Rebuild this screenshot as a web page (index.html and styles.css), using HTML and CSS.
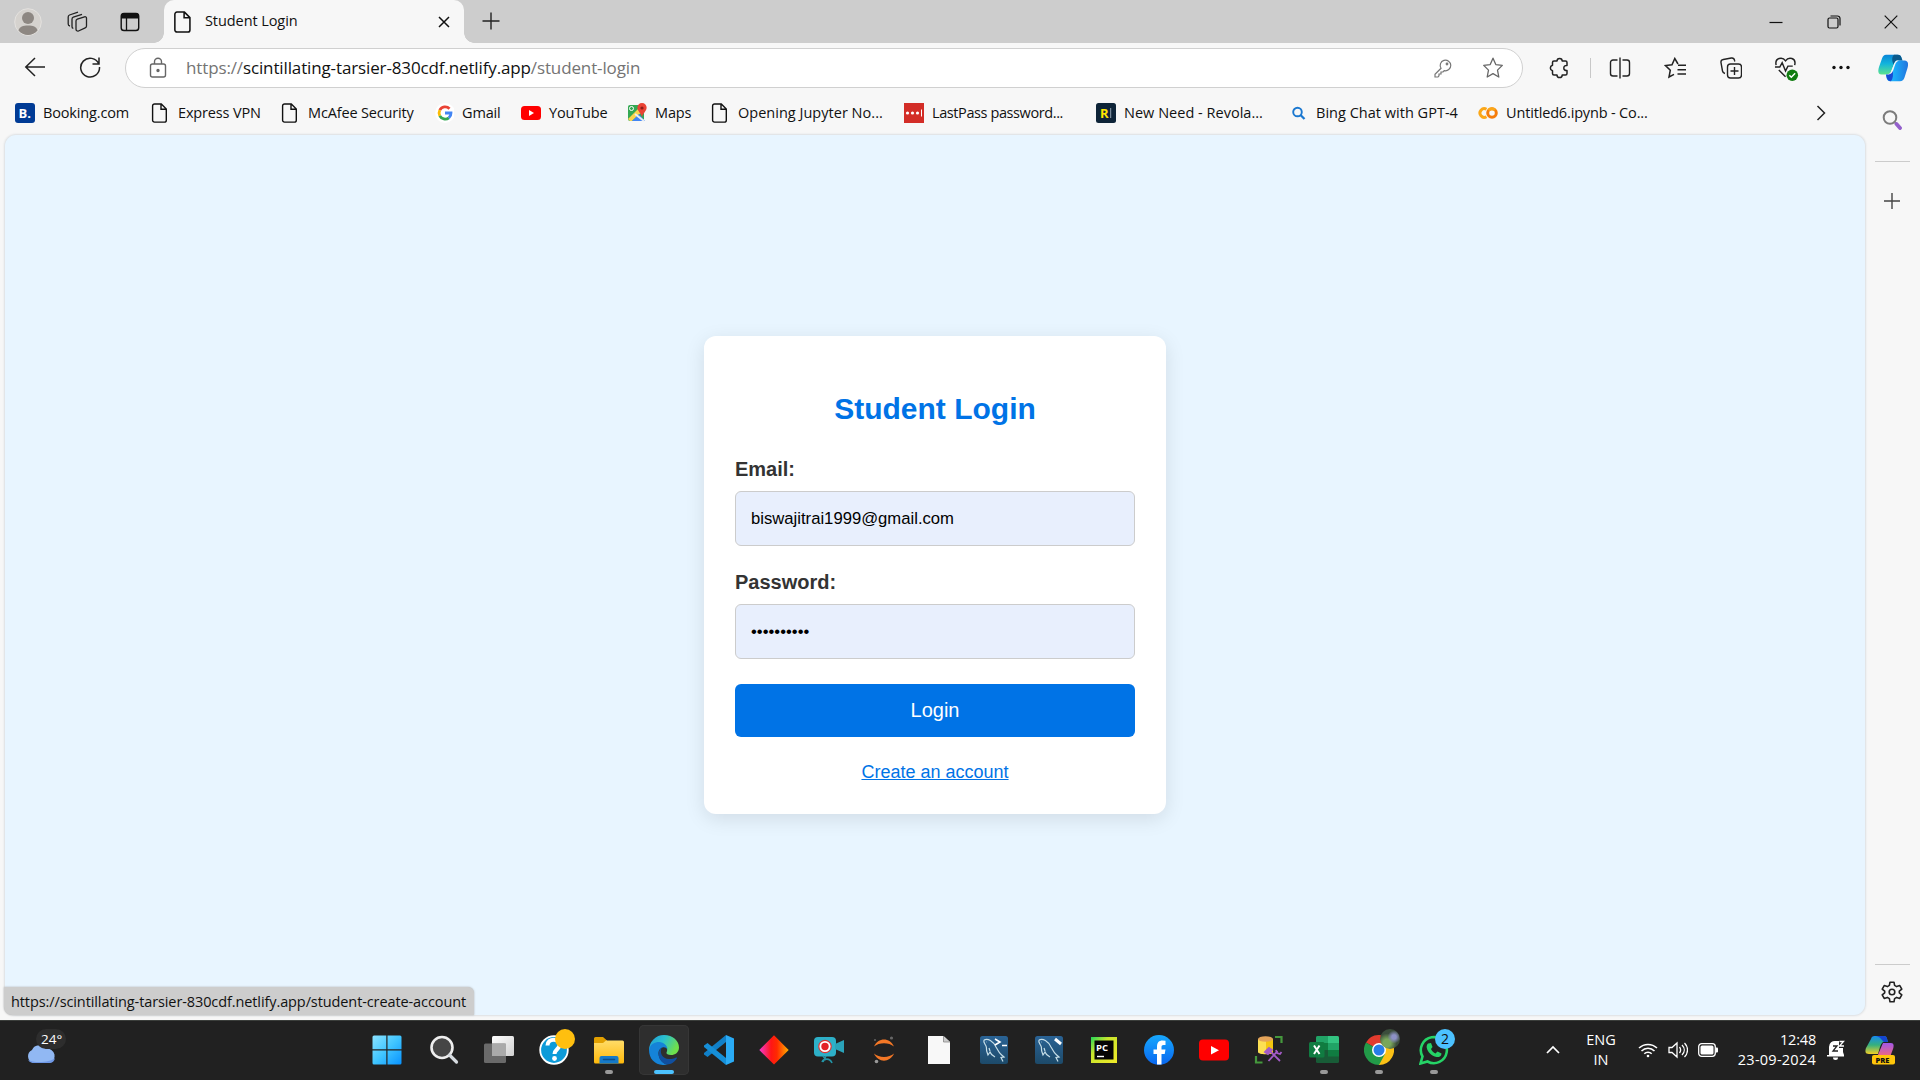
FILE: index.html
```html
<!DOCTYPE html>
<html lang="en">
<head>
<meta charset="utf-8">
<title>Student Login</title>
<link rel="stylesheet" href="styles.css">
</head>
<body>
<svg class="defs" width="0" height="0" aria-hidden="true">
  <defs>
    <symbol id="file" viewBox="0 0 20 20"><path d="M4.500 1h6.800l5 5v11.200a1.900 1.900 0 0 1-1.900 1.900H4.500a1.900 1.900 0 0 1-1.900-1.900V2.900A1.900 1.900 0 0 1 4.500 1zM11 1.200v5h5.200" fill="none" stroke="#111" stroke-width="1.400"/></symbol>
    <symbol id="dolphin" viewBox="0 0 30 30"><rect x="1" y="1" width="28" height="28" rx="2.500" fill="url(#sea)"/><path d="M5 5c4-2 9 1 12 7l3 5c1 2 3 3 5 5l-3 .4 2 4M5 5c-1 2 1 4 2 6s0 4 1 6l1 3 2-3c1 3 3 4 5 5M10 13l1 3M7 7h.5" fill="none" stroke="#c7dfe8" stroke-width="1.200"/></symbol>
    <linearGradient id="sea" x2="0" y2="1"><stop stop-color="#2a6395"/><stop offset="1" stop-color="#1d4a69"/></linearGradient>
    <linearGradient id="win" x2="1" y2="1"><stop stop-color="#8be3ff"/><stop offset=".5" stop-color="#40c5ff"/><stop offset="1" stop-color="#0892ff"/></linearGradient>
    <linearGradient id="cop1" x2="0" y2="1"><stop stop-color="#0a85d8"/><stop offset=".45" stop-color="#12b4dc"/><stop offset="1" stop-color="#5de38d"/></linearGradient>
    <linearGradient id="cop2" x2="1" y2="0"><stop stop-color="#28c4ff"/><stop offset=".5" stop-color="#1aa3f5"/><stop offset="1" stop-color="#2374dc"/></linearGradient>
    <linearGradient id="pre1" x2="0" y2="1"><stop stop-color="#168bee"/><stop offset=".5" stop-color="#35b07d"/><stop offset="1" stop-color="#f3cf27"/></linearGradient>
    <linearGradient id="pre2" x2="0" y2="1"><stop stop-color="#a157e8"/><stop offset="1" stop-color="#f66a77"/></linearGradient>
    <linearGradient id="edgeTop" x2="1" y2=".4"><stop stop-color="#1f9ad9"/><stop offset=".5" stop-color="#2ac0cf"/><stop offset="1" stop-color="#6fe04c"/></linearGradient>
    <linearGradient id="folder" x2="0" y2="1"><stop stop-color="#ffdc68"/><stop offset="1" stop-color="#ffb90a"/></linearGradient>
    <linearGradient id="fire" x2="1"><stop stop-color="#f33bd2"/><stop offset=".4" stop-color="#ff1616"/><stop offset=".6" stop-color="#ff2a00"/><stop offset="1" stop-color="#ffb000"/></linearGradient>
    <linearGradient id="fb" x2="0" y2="1"><stop stop-color="#17a8fd"/><stop offset="1" stop-color="#0866f0"/></linearGradient>
    <linearGradient id="paper" x2="1" y2="1"><stop stop-color="#fff"/><stop offset="1" stop-color="#d0d0d0"/></linearGradient>
    <linearGradient id="pc" x2="1" y2="1"><stop stop-color="#21d759"/><stop offset=".35" stop-color="#c8e52c"/><stop offset="1" stop-color="#f0ea29"/></linearGradient>
  </defs>
</svg>

<header class="tabstrip">
  <div class="strip-tools">
    <svg class="avatar" viewBox="0 0 28 28"><circle cx="14" cy="14" r="13.300" fill="#d5d2ce" stroke="#e4e2df"/><circle cx="14" cy="10" r="6" fill="#8d8782"/><path d="M4.500 22.500c1-4 4.500-5 9.500-5s8.500 1 9.500 5A13 13 0 0 1 14 27a13 13 0 0 1-9.500-4.500z" fill="#8d8782"/></svg>
    <svg class="i22" viewBox="0 0 22 22" fill="none" stroke="#222" stroke-width="1.300"><path d="M11.300 8.200l7.200-2.400a1.500 1.500 0 0 1 2 1.500v7.700a2 2 0 0 1-1.300 1.900L12.500 20a1.800 1.800 0 0 1-2.500-1.700v-8.200a2 2 0 0 1 1.300-1.900zM7.300 17.500a2 2 0 0 1-1.300-2V8.200c0-1 .5-1.700 1.300-2l8.700-2.900M4 15a2 2 0 0 1-1.800-2V6c0-1 .5-1.700 1.300-2l8.500-2.800"/></svg>
    <svg class="i22" viewBox="0 0 22 22"><rect x="2.200" y="2.500" width="17.500" height="17" rx="2.800" fill="none" stroke="#111" stroke-width="1.400"/><path d="M2 7.500V5a3 3 0 0 1 3-3h12a3 3 0 0 1 3 3v2.500z" fill="#111"/><path d="M7.500 7v12" stroke="#111" stroke-width="1.300"/></svg>
  </div>
  <div class="tab">
    <svg class="i22" viewBox="0 0 20 20"><use href="#file"/></svg>
    <span class="tab-title">Student Login</span>
    <svg class="i12" viewBox="0 0 12 12"><path d="M1 1l10 10M11 1L1 11" stroke="#111" stroke-width="1.500"/></svg>
  </div>
  <svg class="newtab" viewBox="0 0 18 18"><path d="M9 .5v17M.5 9h17" stroke="#222" stroke-width="1.400"/></svg>
  <div class="window-buttons">
    <svg viewBox="0 0 14 14"><path d="M.5 7.500h13" stroke="#111" stroke-width="1.200"/></svg>
    <svg viewBox="0 0 14 14" fill="none" stroke="#111" stroke-width="1.200"><rect x="1" y="3" width="10" height="10" rx="1.500"/><path d="M3.500 1h7A2.500 2.500 0 0 1 13 3.500v7"/></svg>
    <svg viewBox="0 0 14 14"><path d="M.7.700l12.600 12.600M13.300.700L.7 13.300" stroke="#111" stroke-width="1.200"/></svg>
  </div>
</header>

<div class="toolbar">
  <svg class="nav" viewBox="0 0 22 22" fill="none" stroke="#222" stroke-width="1.500"><path d="M21 11H2M11 2l-9.200 9L11 20"/></svg>
  <svg class="nav" viewBox="0 0 22 22" fill="none" stroke="#222" stroke-width="1.500"><path d="M19.800 8a9.400 9.400 0 1 0 .7 3M20 1.500v6.500h-6.500"/></svg>
  <div class="address">
    <svg class="lock" viewBox="0 0 20 22" fill="none" stroke="#666" stroke-width="1.400"><rect x="2.500" y="7" width="15" height="13" rx="2"/><path d="M6.500 7V4.800a3.500 3.500 0 0 1 7 0V7"/><circle cx="10" cy="13.500" r="1" fill="#555"/></svg>
    <p class="url">https://<b>scintillating-tarsier-830cdf.netlify.app</b>/student-login</p>
    <svg class="i20" viewBox="0 0 20 20" fill="none" stroke="#777" stroke-width="1.200"><path d="M8 10.300a5.300 5.300 0 1 1 3.200 2.300L10 14H8v2H6v1.700L5 19H2v-2.800z"/><circle cx="14" cy="6" r=".8"/></svg>
    <svg class="i22 star" viewBox="0 0 22 22" fill="none" stroke="#666" stroke-width="1.300"><path d="M11 1.200l2.800 6.400 6.500.8-4.800 4.700 1.300 6.900L11 16.600 5.200 20l1.300-6.900L1.700 8.400l6.500-.8z" stroke-linejoin="round"/></svg>
  </div>
  <div class="actions">
    <svg viewBox="0 0 22 22" fill="none" stroke="#222" stroke-width="1.500"><path d="M6 4h3a2.600 2.600 0 0 1 5.200 0H17.500a1.500 1.500 0 0 1 1.500 1.500V8.500c-4-.8-4.500 5.600 0 5v3a1.500 1.500 0 0 1-1.500 1.500h-3.300a2.600 2.600 0 0 1-5.200 0H6a1.500 1.500 0 0 1-1.500-1.500v-2.700a2.900 2.900 0 0 1 0-5.600V5.500A1.500 1.500 0 0 1 6 4z" stroke-linejoin="round"/></svg>
    <i class="separator"></i>
    <svg viewBox="0 0 22 22" fill="none" stroke="#222" stroke-width="1.400"><path d="M8.500 3H4a2.500 2.500 0 0 0-2.500 2.500v11A2.500 2.500 0 0 0 4 19h4.500M13.500 3H18a2.500 2.500 0 0 1 2.500 2.500v11A2.500 2.500 0 0 1 18 19h-4.500M11 .5v21"/></svg>
    <svg viewBox="0 0 22 22" fill="none" stroke="#222" stroke-width="1.500"><path d="M14 7l-3.200-5.500L8 7.800l-6.500.8 4.800 4.600L5 20l5-2.700M14 8.200h8M13.500 12.700H22M13.500 17H22"/></svg>
    <svg viewBox="0 0 22 22" fill="none" stroke="#222" stroke-width="1.400"><rect x="7.500" y="7" width="14" height="14" rx="3"/><path d="M14.500 10v8M10.500 14h8M5 16.500c-1.500-.3-2.200-1-2.500-2.500L1 5.700a2.800 2.800 0 0 1 2.300-3.200l8-1.500A2.800 2.800 0 0 1 14.500 3.200l.3 1.300"/></svg>
    <svg class="heart" viewBox="0 0 26 26" fill="none" stroke="#222" stroke-width="1.500"><path d="M2.200 9.500C.5 1.500 9 .5 12 5c3-4.500 11.500-3.500 9.500 4.500M5 14.500l7 7M1 11.500h5L8.500 7l3.500 8.500 2.500-5h5"/><circle cx="19" cy="20" r="6" fill="#107c10" stroke="none"/><path d="M16 20l2 2 4-4" stroke="#fff"/></svg>
    <svg viewBox="0 0 22 22" fill="#111"><circle cx="4" cy="10.500" r="1.700"/><circle cx="11" cy="10.500" r="1.700"/><circle cx="18" cy="10.500" r="1.700"/></svg>
    <svg class="copilot" viewBox="0 0 30 28"><path d="M8 .8h12c3 0 3.500 3 4.500 5.700h-5c-2 0-3 2-4 5l-2 5c-1 3-3 4-6 4H3.500c-4 0-3.500-4-2.500-7.500L4 4.500C5 2 6 .8 8 .8z" fill="url(#cop1)"/><path d="M16 .8h4c3 0 3.500 3 4.500 5.700h-5c-2 0-3 1.500-4 4C13.500 6 14 3 16 .8z" fill="#0b5a8c"/><path d="M22 27.200H12c-3 0-3.500-3-4-6.700h1c3 0 4.500-2 5.500-5l2-4.500c1-3 2.500-4.500 5-4.500h5c4 0 4 4 3 7.500l-3 9.500c-1 2.500-2 3.700-4.500 3.700z" fill="url(#cop2)"/><path d="M13 27.200c-3.500 0-4.500-3-5-6.700 3.500 0 5.500-2 6.500-5 1 5 .5 9-1.500 11.700z" fill="#174bd4"/><path d="M19.500 6.500c-2 0-3 2-4 5l-2 5c-1 3-3 4-6 4H9c4 0 5.500-2 6.500-5l1.500-4.500c1-3 2.500-4.500 5-4.500z" fill="#f7f7f7"/></svg>
  </div>
</div>

<nav class="bookmarks">
  <a><svg viewBox="0 0 20 20"><rect width="20" height="20" rx="3" fill="#003b95"/><text x="3.500" y="15" class="logo-letter">B.</text></svg><span>Booking.com</span></a>
  <a><svg viewBox="0 0 20 20"><use href="#file"/></svg><span>Express VPN</span></a>
  <a><svg viewBox="0 0 20 20"><use href="#file"/></svg><span>McAfee Security</span></a>
  <a><svg viewBox="0 0 20 20" fill="none" stroke-width="2.800"><circle cx="11" cy="10" r="10" fill="#fff"/><path d="M15.500 5.800A6 6 0 0 0 5.800 7.200" stroke="#ea4335"/><path d="M5.800 7.200a6 6 0 0 0 0 5.600" stroke="#fbbc05"/><path d="M5.800 12.800a6 6 0 0 0 9.100 2" stroke="#34a853"/><path d="M14.800 14.800A6 6 0 0 0 17 10h-6" stroke="#4285f4"/></svg><span>Gmail</span></a>
  <a><svg viewBox="0 0 20 20"><rect y="3" width="20" height="14" rx="3.500" fill="#f00"/><path d="M8 7l5 3-5 3z" fill="#fff"/></svg><span>YouTube</span></a>
  <a><svg viewBox="0 0 20 20"><rect x="1" y="2" width="16" height="16" rx="2" fill="#34a853"/><path d="M1 16L14 3l4 3L5 18H3z" fill="#fbd34d"/><path d="M5 18l7-7 6 7z" fill="#4285f4"/><path d="M8 11l9 7" stroke="#e9edf2" stroke-width="2"/><path d="M15 0a4.600 4.600 0 0 0-4.600 5c0 3 3.600 5 4.600 9 1-4 4.600-6 4.600-9A4.600 4.600 0 0 0 15 0z" fill="#ea4335"/><circle cx="15" cy="5" r="1.600" fill="#8c1d18"/><circle cx="4.500" cy="5.500" r="2" fill="none" stroke="#fff"/></svg><span>Maps</span></a>
  <a><svg viewBox="0 0 20 20"><use href="#file"/></svg><span class="loose">Opening Jupyter No...</span></a>
  <a><svg viewBox="0 0 20 20"><rect width="20" height="20" fill="#d32d27"/><g fill="#fff"><circle cx="3.500" cy="10" r="1.600"/><circle cx="8.500" cy="10" r="1.600"/><circle cx="13.500" cy="10" r="1.600"/><path d="M17 6.500h1v7h-1z"/></g></svg><span class="snug">LastPass password...</span></a>
  <a><svg viewBox="0 0 20 20"><rect width="20" height="20" rx="2.500" fill="#0e2438"/><text x="4" y="15" class="logo-letter yellow">R</text><path d="M14.700 5v10" stroke="#90a0b0"/></svg><span class="loose">New Need - Revola...</span></a>
  <a><svg viewBox="0 0 20 20" fill="none" stroke="#1b78d0"><circle cx="9.500" cy="9" r="4.300" stroke-width="1.900"/><path d="M12.500 12l4 4" stroke-width="2.300"/></svg><span class="loose">Bing Chat with GPT-4</span></a>
  <a><svg viewBox="0 0 20 20" fill="none" stroke-width="3"><path d="M8.500 6.300A4.300 4.300 0 1 0 8.500 13.700" stroke="#fba718"/><circle cx="14" cy="10" r="4.300" stroke="#f57c0a"/><path d="M10.500 7.300A4.300 4.300 0 0 1 17 7" stroke="#fba718"/></svg><span>Untitled6.ipynb - Co...</span></a>
  <svg class="more" viewBox="0 0 10 16" fill="none" stroke="#222" stroke-width="1.500"><path d="M1.500 1l7 7-7 7"/></svg>
</nav>

<div class="workspace">
  <main class="page">
    <form class="card">
      <h1>Student Login</h1>
      <label for="email">Email:</label>
      <input id="email" type="text" value="biswajitrai1999@gmail.com">
      <label for="password">Password:</label>
      <input id="password" type="password" value="0123456789">
      <button type="button">Login</button>
      <a class="create">Create an account</a>
    </form>
    <div class="status"><span>https://scintillating-tarsier-830cdf.netlify.app/student-create-account</span></div>
  </main>
  <aside class="sidebar">
    <svg class="side-search" viewBox="0 0 20 20" fill="none"><circle cx="8" cy="7.500" r="6.300" stroke="#7c7c7c" stroke-width="2"/><path d="M12.500 12l2 2" stroke="#888" stroke-width="2"/><path d="M14.500 14l3.500 4" stroke="#9460cc" stroke-width="3.800" stroke-linecap="round"/></svg>
    <hr>
    <svg class="side-plus" viewBox="0 0 16 16"><path d="M8 0v16M0 8h16" stroke="#444" stroke-width="1.400"/></svg>
    <hr class="low">
    <svg class="gear" viewBox="0 0 22 22" fill="none" stroke="#222" stroke-width="1.600" stroke-linejoin="round"><path d="M9 1.200h4l.6 3.200 2 1.200 3.200-1 2 3.500-2.500 2.100v1.600l2.500 2.100-2 3.500-3.200-1-2 1.200-.6 3.200H9l-.6-3.200-2-1.200-3.200 1-2-3.500 2.500-2.100v-1.600L1.200 8.100l2-3.500 3.200 1 2-1.200z"/><circle cx="11" cy="11" r="2.800"/></svg>
  </aside>
</div>

<footer class="taskbar">
  <div class="weather">
    <svg viewBox="0 0 32 24"><path d="M22 1h6v5h-4z" fill="#ee8a30"/><path d="M8 20a7 7 0 0 1-1-13A8 8 0 0 1 21 6a7 7 0 0 1 3 14z" fill="#91b8f3"/><path d="M3 17c5 3 22 3 27-2a6 6 0 0 1-6 5H8a6 6 0 0 1-5-3z" fill="#6f98e6"/></svg>
    <span>24°</span>
  </div>
  <div class="apps">
    <div class="app"><svg viewBox="0 0 30 30"><path d="M.5 2a1.500 1.500 0 0 1 1.500-1.500h12.300v13.800H.5zM15.500.500h12.500A1.500 1.500 0 0 1 29.500 2v12.300h-14zM.5 15.500h13.800v14H2A1.500 1.500 0 0 1 .5 28zM15.500 15.500h14V28a1.500 1.500 0 0 1-1.500 1.500H15.500z" fill="url(#win)"/></svg></div>
    <div class="app"><svg viewBox="0 0 30 30"><circle cx="13" cy="12.500" r="10.500" fill="#464646" stroke="#eee" stroke-width="2.600"/><path d="M20.500 20l7 7" stroke="#d6dbe0" stroke-width="3.200" stroke-linecap="round"/></svg></div>
    <div class="app"><svg viewBox="0 0 30 30"><rect x="8" y="1" width="22" height="20" rx="1.500" fill="url(#paper)"/><rect y="8.500" width="22" height="19.500" rx="1.500" fill="#777" opacity=".85"/><path d="M8 8.500h14v12.500H8z" fill="#aaa"/></svg></div>
    <div class="app"><svg viewBox="0 0 30 30"><circle cx="15" cy="15" r="13.800" fill="#0d9bd9" stroke="#fff" stroke-width="1.800"/><path d="M8.500 10.500C8.500 2.500 21 3 20.500 10c0 4-5 4.500-5 9" fill="none" stroke="#fff" stroke-width="4"/><circle cx="15.500" cy="23.500" r="2.400" fill="#fff"/></svg><i class="badge gold"></i></div>
    <div class="app running"><svg viewBox="0 0 30 30"><path d="M0 3.500A1.500 1.500 0 0 1 1.500 2H9l4 3.500V10H0z" fill="#e2a000"/><path d="M0 8h9l3-2.500h16.500A1.500 1.500 0 0 1 30 7v20a1.500 1.500 0 0 1-1.500 1.500h-27A1.500 1.500 0 0 1 0 27z" fill="url(#folder)"/><path d="M5.500 28.500V23A2 2 0 0 1 7.500 21h15a2 2 0 0 1 2 2v5.500z" fill="#157ac9"/><path d="M9.500 24.500h11" stroke="#0b4e8b" stroke-width="1.500" stroke-linecap="round"/></svg></div>
    <div class="app active"><svg viewBox="0 0 30 30"><path d="M0 15A15 15 0 0 1 15 0c9 0 15 6 15 12.500 0 5-4 7.500-8 7.500-3 0-5-1-4.500-2.500C19 15 18 11 14 11z" fill="url(#edgeTop)"/><path d="M0 15C1 9 6 7 10 7c5 0 8.500 4 8.500 7.500C16 10 9 13 9.500 19c.5 5 4 9.500 9 10.500C8 32 0 25 0 15z" fill="#1583d8"/><path d="M13 12c-3 5 0 12 7 12 3 0 5-.5 7-1.500.8-.3 1.200.3.800 1C26 26.500 22 29.500 18.500 29.500 11 28.500 6 18 13 12z" fill="#104f9f"/></svg></div>
    <div class="app"><svg viewBox="0 0 30 30"><path d="M22 0v7L3.500 22 0 19.500v-1.500z" fill="#1180c8"/><path d="M22 30v-7L3.500 8 0 10.500V12z" fill="#168fd8"/><path d="M22 0l8 3.500v23L22 30z" fill="#2aabf5"/></svg></div>
    <div class="app"><svg viewBox="0 0 30 30"><path d="M15 .3L29.700 15 15 29.500.300 15z" fill="url(#fire)"/></svg></div>
    <div class="app"><svg viewBox="0 0 30 30"><rect y="2" width="22" height="19.500" rx="4" fill="#2db0c8"/><path d="M21 9l9-4v13l-9-4z" fill="#2aa3ba"/><circle cx="11" cy="11.500" r="6.200" fill="#fff" stroke="#d33" stroke-width="1.200"/><circle cx="11" cy="11.500" r="3.700" fill="#e32226"/><path d="M12 21l-3 6M8 27c2-4 8-4 10 1M9 21l3 4" fill="none" stroke="#2393a5" stroke-width="1.600"/></svg></div>
    <div class="app"><svg viewBox="0 0 30 30"><path d="M5 11.500C9 2 21 2 25 11.500 20 7 10 7 5 11.500zM5 18.500c4 9.500 16 9.500 20 0-5 4.500-15 4.500-20 0z" fill="#f37726"/><circle cx="22.500" cy="3" r="1.600" fill="#666"/><circle cx="6" cy="5" r="1" fill="#666"/><circle cx="7.500" cy="26.500" r="1.800" fill="#999"/></svg></div>
    <div class="app"><svg viewBox="0 0 30 30"><path d="M4 1h15.500l6.500 6v22H4z" fill="#f8f8f8"/><path d="M19.500 1v6H26" fill="#ccc" stroke="#888" stroke-width=".8"/></svg></div>
    <div class="app"><svg viewBox="0 0 30 30"><use href="#dolphin"/><path d="M16 4l5 3-5 3M23 10.500h5" stroke="#fff" stroke-width="1.600" fill="none"/></svg></div>
    <div class="app"><svg viewBox="0 0 30 30"><use href="#dolphin"/><path d="M21 4l6 5" stroke="#fff" stroke-width="3"/></svg></div>
    <div class="app"><svg viewBox="0 0 30 30"><rect x="2" y="2" width="26" height="26" fill="url(#pc)"/><rect x="5.500" y="5.500" width="19" height="19" fill="#050505"/><text x="7" y="15.500" class="pc-letter">PC</text><path d="M8 21.500h7" stroke="#fff" stroke-width="1.400"/></svg></div>
    <div class="app"><svg viewBox="0 0 30 30"><circle cx="15" cy="15" r="15" fill="url(#fb)"/><path d="M13 29.500V19H9.500v-4.500H13V12c0-4.500 2-6.500 5.500-6.500l3 .3V10h-2c-1.500 0-2 .8-2 2v2.500h4l-.8 4.500h-3.200v10.500z" fill="#fff"/></svg></div>
    <div class="app"><svg viewBox="0 0 30 30"><rect y="4.500" width="30" height="21" rx="4" fill="#f00"/><path d="M12 11l8 4.200-8 4.200z" fill="#fff"/></svg></div>
    <div class="app"><svg viewBox="0 0 30 30"><path d="M4 4v13c0 3 15 3 15 0V4z" fill="#fce053"/><path d="M12 5v14c5 0 7-1 7-2V4z" fill="#f4c610"/><ellipse cx="11.500" cy="4" rx="7.500" ry="2.800" fill="#e4a45a"/><path d="M21 2h6.500v6M2 21v6.500h6.500" fill="none" stroke="#45983d" stroke-width="2.200"/><path d="M11 17l4-4 3 2-4 4zM14.500 26l9-10M15 15l11 11" stroke="#a35bc6" stroke-width="1.800" fill="#a35bc6"/><path d="M22 15l1 3 3 1 1.500-2" fill="none" stroke="#a35bc6" stroke-width="1.800"/></svg></div>
    <div class="app running"><svg viewBox="0 0 30 30"><rect x="7" y="1" width="23" height="27" rx="1.500" fill="#185c37"/><path d="M8.500 1H19v7H7V2.500A1.500 1.500 0 0 1 8.500 1z" fill="#21a366"/><path d="M19 1h9.500A1.500 1.500 0 0 1 30 2.500V8H19z" fill="#33c481"/><path d="M7 8h12v7H7z" fill="#107c41"/><path d="M19 8h11v7H19z" fill="#21a366"/><path d="M19 15h11v6.500H19z" fill="#107c41"/><rect y="7" width="15.500" height="15.500" rx="1.500" fill="#107c41"/><path d="M5 10.500l5.500 8.500M10.500 10.500L5 19" stroke="#fff" stroke-width="2"/></svg></div>
    <div class="app running"><svg viewBox="0 0 30 30"><path d="M15 15L2 7.500A15 15 0 0 1 28 7.500z" fill="#e23b2e"/><path d="M15 15L28 7.500A15 15 0 0 1 15 30z" fill="#fbc116"/><path d="M15 15v3l6 1-6 11A15 15 0 0 1 2 7.500z" fill="#229a48"/><circle cx="15" cy="15" r="7" fill="#fff"/><circle cx="15" cy="15" r="5.500" fill="#287de9"/></svg><i class="badge photo"></i></div>
    <div class="app running"><svg viewBox="0 0 30 30"><path d="M1.500 28.500l2-7a13 13 0 1 1 5 5z" fill="#222" stroke="#25d366" stroke-width="2.600"/><path d="M9 8.500l3-.500 1.500 4-1.500 2c1 2 2.500 3.500 4.500 4.500l2-2 4 2c0 3-3 4-5 3.500-5-1-9-5-9.800-9.500-.2-1.500.3-3 1.300-4z" fill="#25d366"/></svg><i class="badge count">2</i></div>
  </div>
  <div class="tray">
    <svg class="up" viewBox="0 0 14 10" fill="none" stroke="#fff" stroke-width="1.700"><path d="M1 8l6-6 6 6"/></svg>
    <p class="lang">ENG<br>IN</p>
    <svg class="wifi" viewBox="0 0 20 16" fill="none" stroke="#fff" stroke-width="1.500"><path d="M1 6a13 13 0 0 1 18 0M3.500 9a9 9 0 0 1 13 0M6.300 11.800a5 5 0 0 1 7.400 0"/><circle cx="10" cy="14" r="1.300" fill="#fff" stroke="none"/></svg>
    <svg class="sound" viewBox="0 0 20 18" fill="none" stroke="#fff" stroke-width="1.300"><path d="M1 6.500h3L9 2v14L4 11.500H1zM11.500 6c1.500 2 1.500 4 0 6M14 4c3 3 3 7 0 10M16.500 2c4 4 4 10 0 14"/></svg>
    <svg class="battery" viewBox="0 0 20 14"><rect x=".7" y=".7" width="16.600" height="12.600" rx="3" fill="none" stroke="#fff" stroke-width="1.300"/><rect x="2.500" y="2.500" width="13" height="9" rx="1.500" fill="#fff"/><path d="M18 4.500h1a1 1 0 0 1 1 1v3a1 1 0 0 1-1 1h-1z" fill="#fff"/></svg>
    <p class="clock">12:48<br><span class="date">23-09-2024</span></p>
    <svg class="bell" viewBox="0 0 18 20"><path d="M2 15V7a6 6 0 0 1 7-6h3v7h4v4l1 3v1.500H0V15zM6 17.500h5a2.500 2.500 0 0 1-5 0z" fill="#fff"/><path d="M6 6h4l-4 5h5" stroke="#222" fill="none" stroke-width="1.300"/><path d="M12.500 1.500h4l-4 4.500h4.500" stroke="#fff" fill="none" stroke-width="1.300"/></svg>
    <svg class="pre" viewBox="0 0 30 30"><path d="M6 4c1-3 2-3 5-3h8c3 0 3 3 4 6h-4c-2 0-3 2-4 5l-2 7H4c-4 0-4-3-3-6z" fill="url(#pre1)"/><path d="M11 1h8c3 0 3 3 4 6h-4c-1 0-3-5-8-6z" fill="#1445d0"/><path d="M18 8h8c3 0 3 3 2 6l-3 8H12z" fill="url(#pre2)"/><rect x="7" y="20" width="23" height="9.500" rx="2" fill="#ffc60a"/><text x="10.500" y="27.500" class="pre-letter">PRE</text></svg>
  </div>
</footer>
</body>
</html>
```
FILE: styles.css
```css
* { box-sizing: border-box; }
html, body { margin: 0; height: 100%; }
body {
  width: 1920px; height: 1080px; overflow: hidden;
  display: grid; grid-template-rows: 43px 50px 42px 885px 60px;
  background: #f7f7f7; color: #111;
  font-family: "Open Sans", "Noto Sans", sans-serif; font-size: 14.500px;
}
p { margin: 0; }
svg { display: block; flex: none; }
.defs { position: absolute; }
.i12 { width: 12px; height: 12px; }
.i20 { width: 20px; height: 20px; }
.i22 { width: 22px; height: 22px; }

.tabstrip { display: flex; align-items: center; background: #cdcdcd; }
.strip-tools { width: 164px; padding-left: 14px; display: flex; align-items: center; }
.avatar { width: 28px; height: 28px; margin-right: 24px; }
.strip-tools .i22 { margin-right: 31px; }
.tab {
  position: relative; width: 300px; height: 43px; padding: 0 14px 0 8px;
  display: flex; align-items: center; background: #f7f7f7; border-radius: 10px 10px 0 0;
}
.tab::before, .tab::after {
  content: ""; position: absolute; bottom: 0; width: 10px; height: 10px;
}
.tab::before { left: -10px; background: radial-gradient(circle at 0 0, #cdcdcd 9.500px, #f7f7f7 10px); }
.tab::after { right: -10px; background: radial-gradient(circle at 100% 0, #cdcdcd 9.500px, #f7f7f7 10px); }
.tab-title { flex: 1; margin: -3px 0 0 11px; letter-spacing: -.080px; }
.newtab { width: 18px; height: 18px; margin: -1px 0 0 18px; }
.window-buttons { margin-left: auto; display: flex; gap: 43.500px; padding-right: 22px; }
.window-buttons svg { width: 14px; height: 14px; }

.toolbar { display: flex; align-items: center; padding-left: 24px; }
.nav { width: 22px; height: 22px; margin: -2px 33px 0 0; }
.nav + .nav { margin-right: 24px; }
.address {
  width: 1398px; height: 40px; padding: 0 18px 0 22px;
  display: flex; align-items: center;
  background: #fff; border: 1px solid #d0d0d0; border-radius: 20px;
}
.lock { width: 20px; height: 22px; margin-top: -1px; }
.url { flex: 1; margin: -2px 0 0 18px; font-size: 17px; letter-spacing: -.130px; color: #747474; }
.url b { font-weight: 400; color: #111; }
.star { margin-left: 29px; }
.actions { flex: 1; display: flex; align-items: center; padding-left: 25px; }
.actions svg { width: 22px; height: 22px; margin-right: 33.200px; }
.separator { width: 1px; height: 20px; background: #c8c8c8; margin: 0 18px 0 -13px; }
.actions .heart { width: 25px; height: 25px; margin: 0 31px 0 -1px; }
.actions .copilot { width: 30px; height: 28px; margin: 0 0 0 -7px; }

.bookmarks {
  display: grid; align-items: center; padding: 0 0 2px 15px;
  grid-template-columns: 135px 130px 154px 87px 106px 83px 194px 192px 192px 190px 338px 10px;
}
.bookmarks a { display: flex; align-items: center; gap: 8px; white-space: nowrap; }
.bookmarks a svg { width: 20px; height: 20px; }
.bookmarks a span { margin-top: -2px; letter-spacing: -.160px; }
.bookmarks a .snug { letter-spacing: -.400px; }
.bookmarks a .loose { letter-spacing: .020px; }
.bookmarks .more { width: 10px; height: 16px; }
.logo-letter { font: 700 13px "Open Sans", sans-serif; fill: #fff; }
.yellow { fill: #ffe600; }

.workspace { display: grid; grid-template-columns: 1860px 55px; padding-left: 5px; }
.page {
  position: relative; height: 880px; display: grid; place-items: center;
  background: #e8f5ff; border-radius: 11px; box-shadow: 0 0 2px 1px #dcdfe2;
}
.card {
  width: 462px; height: 478px; padding: 31px; display: flex; flex-direction: column;
  background: #fff; border-radius: 12px; box-shadow: 0 5px 20px rgba(0, 0, 0, .1);
  font-family: "Liberation Sans", Arial, sans-serif;
}
h1 { margin: 25px 0 32px; font-size: 30px; line-height: 34px; text-align: center; color: #0073e6; }
.card label { font-size: 20px; font-weight: 700; line-height: 23px; color: #333; margin-bottom: 10px; }
.card input {
  height: 55px; padding: 1px 15px 0; margin: 0 0 25px; border: 1px solid #ccc; border-radius: 6px;
  background: #e8effd; color: #000; font: 16.670px "Liberation Sans", Arial, sans-serif; outline: 0;
}
.card button {
  height: 53px; border: 0; border-radius: 6px; background: #0073e6; color: #fff;
  font: 20px "Liberation Sans", Arial, sans-serif;
}
.create { margin-top: 25px; font-size: 18px; line-height: 21px; text-align: center; color: #0073e6; text-decoration: underline; }
.status {
  position: absolute; left: -1px; bottom: 0; width: 470px; height: 28px; padding-left: 7px;
  display: flex; align-items: center; background: #cdcdcd; border-radius: 0 6px 0 8px;
  box-shadow: 0 0 2px #aaa; white-space: nowrap; letter-spacing: -.100px;
}

.sidebar { display: flex; flex-direction: column; align-items: center; margin-right: 1px; height: 880px; }
.side-search { width: 20px; height: 20px; margin-top: -25px; }
.sidebar hr { width: 35px; height: 1px; margin: 31px 0; border: 0; background: #ccc; }
.side-plus { width: 16px; height: 16px; }
.sidebar .low { margin: auto 0 16px; }
.gear { width: 22px; height: 22px; margin-bottom: 12px; }

.taskbar { display: flex; align-items: center; background: #212121; border-top: 1px solid #3b3e3b; color: #fff; padding-bottom: 1px; }
.weather { position: relative; width: 360px; height: 58px; padding: 22px 0 0 25px; }
.weather svg { width: 32px; height: 24px; }
.weather span {
  position: absolute; left: 36px; top: 8px; width: 30px; height: 20px; border-radius: 10px;
  background: #2d2d2d; line-height: 20px; font-size: 13.500px; padding-left: 5px;
}
.apps { width: 1100px; display: grid; grid-template-columns: 56px repeat(19, 55px); }
.app { position: relative; height: 50px; width: 50px; margin-left: 3px; display: grid; place-items: center; border-radius: 5px; }
.app:first-child { margin-left: 2px; }
.app svg { width: 30px; height: 30px; }
.active { background: #2e2e2e; box-shadow: inset 0 0 0 1px #363636; }
.running::after, .active::after {
  content: ""; position: absolute; bottom: 1px; left: 21px; width: 8px; height: 4px; border-radius: 2px; background: #999;
}
.active::after { left: 15px; width: 20px; background: #4cc2ff; }
.badge { position: absolute; left: 26px; top: 4px; width: 20px; height: 20px; border-radius: 50%; font-style: normal; }
.gold { background: #ffbf0f; }
.photo { background: radial-gradient(circle at 70% 40%, #8c91c6 0 12%, transparent 35%), radial-gradient(circle at 35% 70%, #79a65a 0 20%, transparent 50%), #3b4d3c; }
.count { background: #4cc2ff; color: #111; text-align: center; font-size: 14px; line-height: 20px; }
.pc-letter { font: 700 9.500px "Open Sans", sans-serif; fill: #fff; }
.pre-letter { font: 800 7.500px "Open Sans", sans-serif; fill: #111; }
.tray { flex: 1; display: flex; align-items: center; padding-left: 86px; line-height: 20px; }
.up { width: 14px; height: 10px; }
.lang { width: 82px; text-align: center; }
.wifi { width: 20px; height: 16px; margin-left: -4px; }
.sound { width: 20px; height: 18px; margin-left: 10px; }
.battery { width: 20px; height: 14px; margin-left: 10px; }
.clock { width: 98px; text-align: right; letter-spacing: -.200px; }
.date { letter-spacing: .250px; }
.bell { width: 18px; height: 20px; margin-left: 11px; }
.pre { width: 30px; height: 30px; margin-left: 20px; }
```
